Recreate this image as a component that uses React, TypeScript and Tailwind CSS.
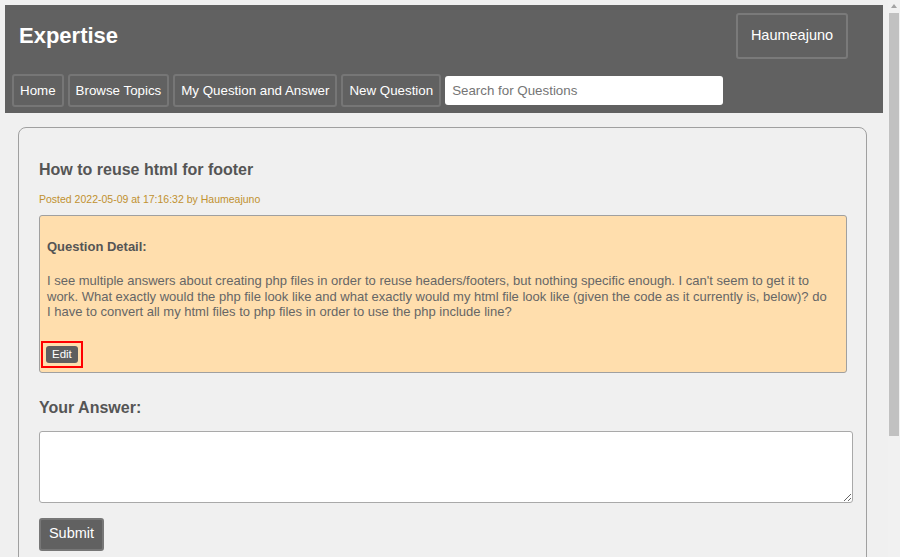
import React from "react";

const navBtn =
  "h-[33px] px-[6px] border-2 border-[#767676] rounded-[3px] text-[13.33px] text-white bg-[#616161] leading-none";

export default function App() {
  return (
    <div className="flex h-[557px] w-[900px] overflow-hidden bg-[#f0f0f0] font-['Liberation_Sans',Arial,sans-serif]">
      <div className="w-[888px] px-[5px] pt-[5px]">
        <header className="h-[108px] bg-[#616161] pt-[8px]">
          <div className="flex h-[46px] items-center justify-between pl-[14px] pr-[35px]">
            <h1 className="text-[22px] font-bold leading-[26px] text-white">Expertise</h1>
            <button className="h-[46px] w-[112px] rounded-[3px] border-2 border-[#7a7a7a] text-[14.5px] text-white">
              Haumeajuno
            </button>
          </div>
          <nav className="mt-[15px] flex h-[33px] items-center gap-[4px] pl-[7px]">
            <button className={navBtn}>Home</button>
            <button className={navBtn}>Browse Topics</button>
            <button className={navBtn}>My Question and Answer</button>
            <button className={navBtn}>New Question</button>
            <input
              placeholder="Search for Questions"
              className="h-[29px] w-[278px] rounded-[3px] bg-white pl-[7px] text-[13.33px] text-[#333] outline-none placeholder:text-[#757575]"
            />
          </nav>
        </header>

        <main className="ml-[13px] mt-[14px] h-[500px] w-[849px] rounded-[8px] border border-[#a0a0a0] pl-[20px] pt-[33px]">
          <h2 className="text-[16px] font-bold leading-[18px] text-[#555]">How to reuse html for footer</h2>
          <p className="mt-[14px] text-[10.5px] leading-[12px] text-[#c1912f]">
            Posted 2022-05-09 at 17:16:32 by Haumeajuno
          </p>

          <div className="mt-[10px] w-[808px] rounded-[3px] border border-[#a0a0a0] bg-[#ffdead] px-[7px] pb-[4px] pt-[23px]">
            <div className="text-[13px] font-bold leading-[15px] text-[#555]">Question Detail:</div>
            <p className="mt-[19px] whitespace-nowrap text-[13px] leading-[15.5px] text-[#666]">
              I see multiple answers about creating php files in order to reuse headers/footers, but nothing specific enough. I can't seem to get it to
              <br />
              work. What exactly would the php file look like and what exactly would my html file look like (given the code as it currently is, below)? do
              <br />
              I have to convert all my html files to php files in order to use the php include line?
            </p>
            <div className="ml-[-6px] mt-[21px] inline-block border-2 border-[#f00] p-[3px] align-top">
              <button className="block h-[17px] rounded-[3px] bg-[#5f5f5f] px-[6px] text-[11.5px] leading-[17px] text-white">
                Edit
              </button>
            </div>
          </div>

          <h3 className="mt-[26px] text-[16px] font-bold leading-[18px] text-[#555]">Your Answer:</h3>
          <textarea className="mt-[14px] block h-[72px] w-[814px] resize rounded-[3px] border border-[#a9a9a9] bg-white" />
          <button className="mt-[15px] h-[33px] w-[65px] rounded-[3px] border-2 border-[#777] bg-[#616161] text-[14.5px] text-white">
            Submit
          </button>
        </main>
      </div>

      <div className="h-full w-[12px] bg-[#f1f1f1]">
        <div className="flex h-[13px] items-start justify-center pt-[4px]">
          <svg width="6" height="4" viewBox="0 0 6 4">
            <polygon points="3,0 6,4 0,4" fill="#a3a3a3" />
          </svg>
        </div>
        <div className="ml-[1px] h-[423px] w-[10px] bg-[#c1c1c1]" />
      </div>
    </div>
  );
}
